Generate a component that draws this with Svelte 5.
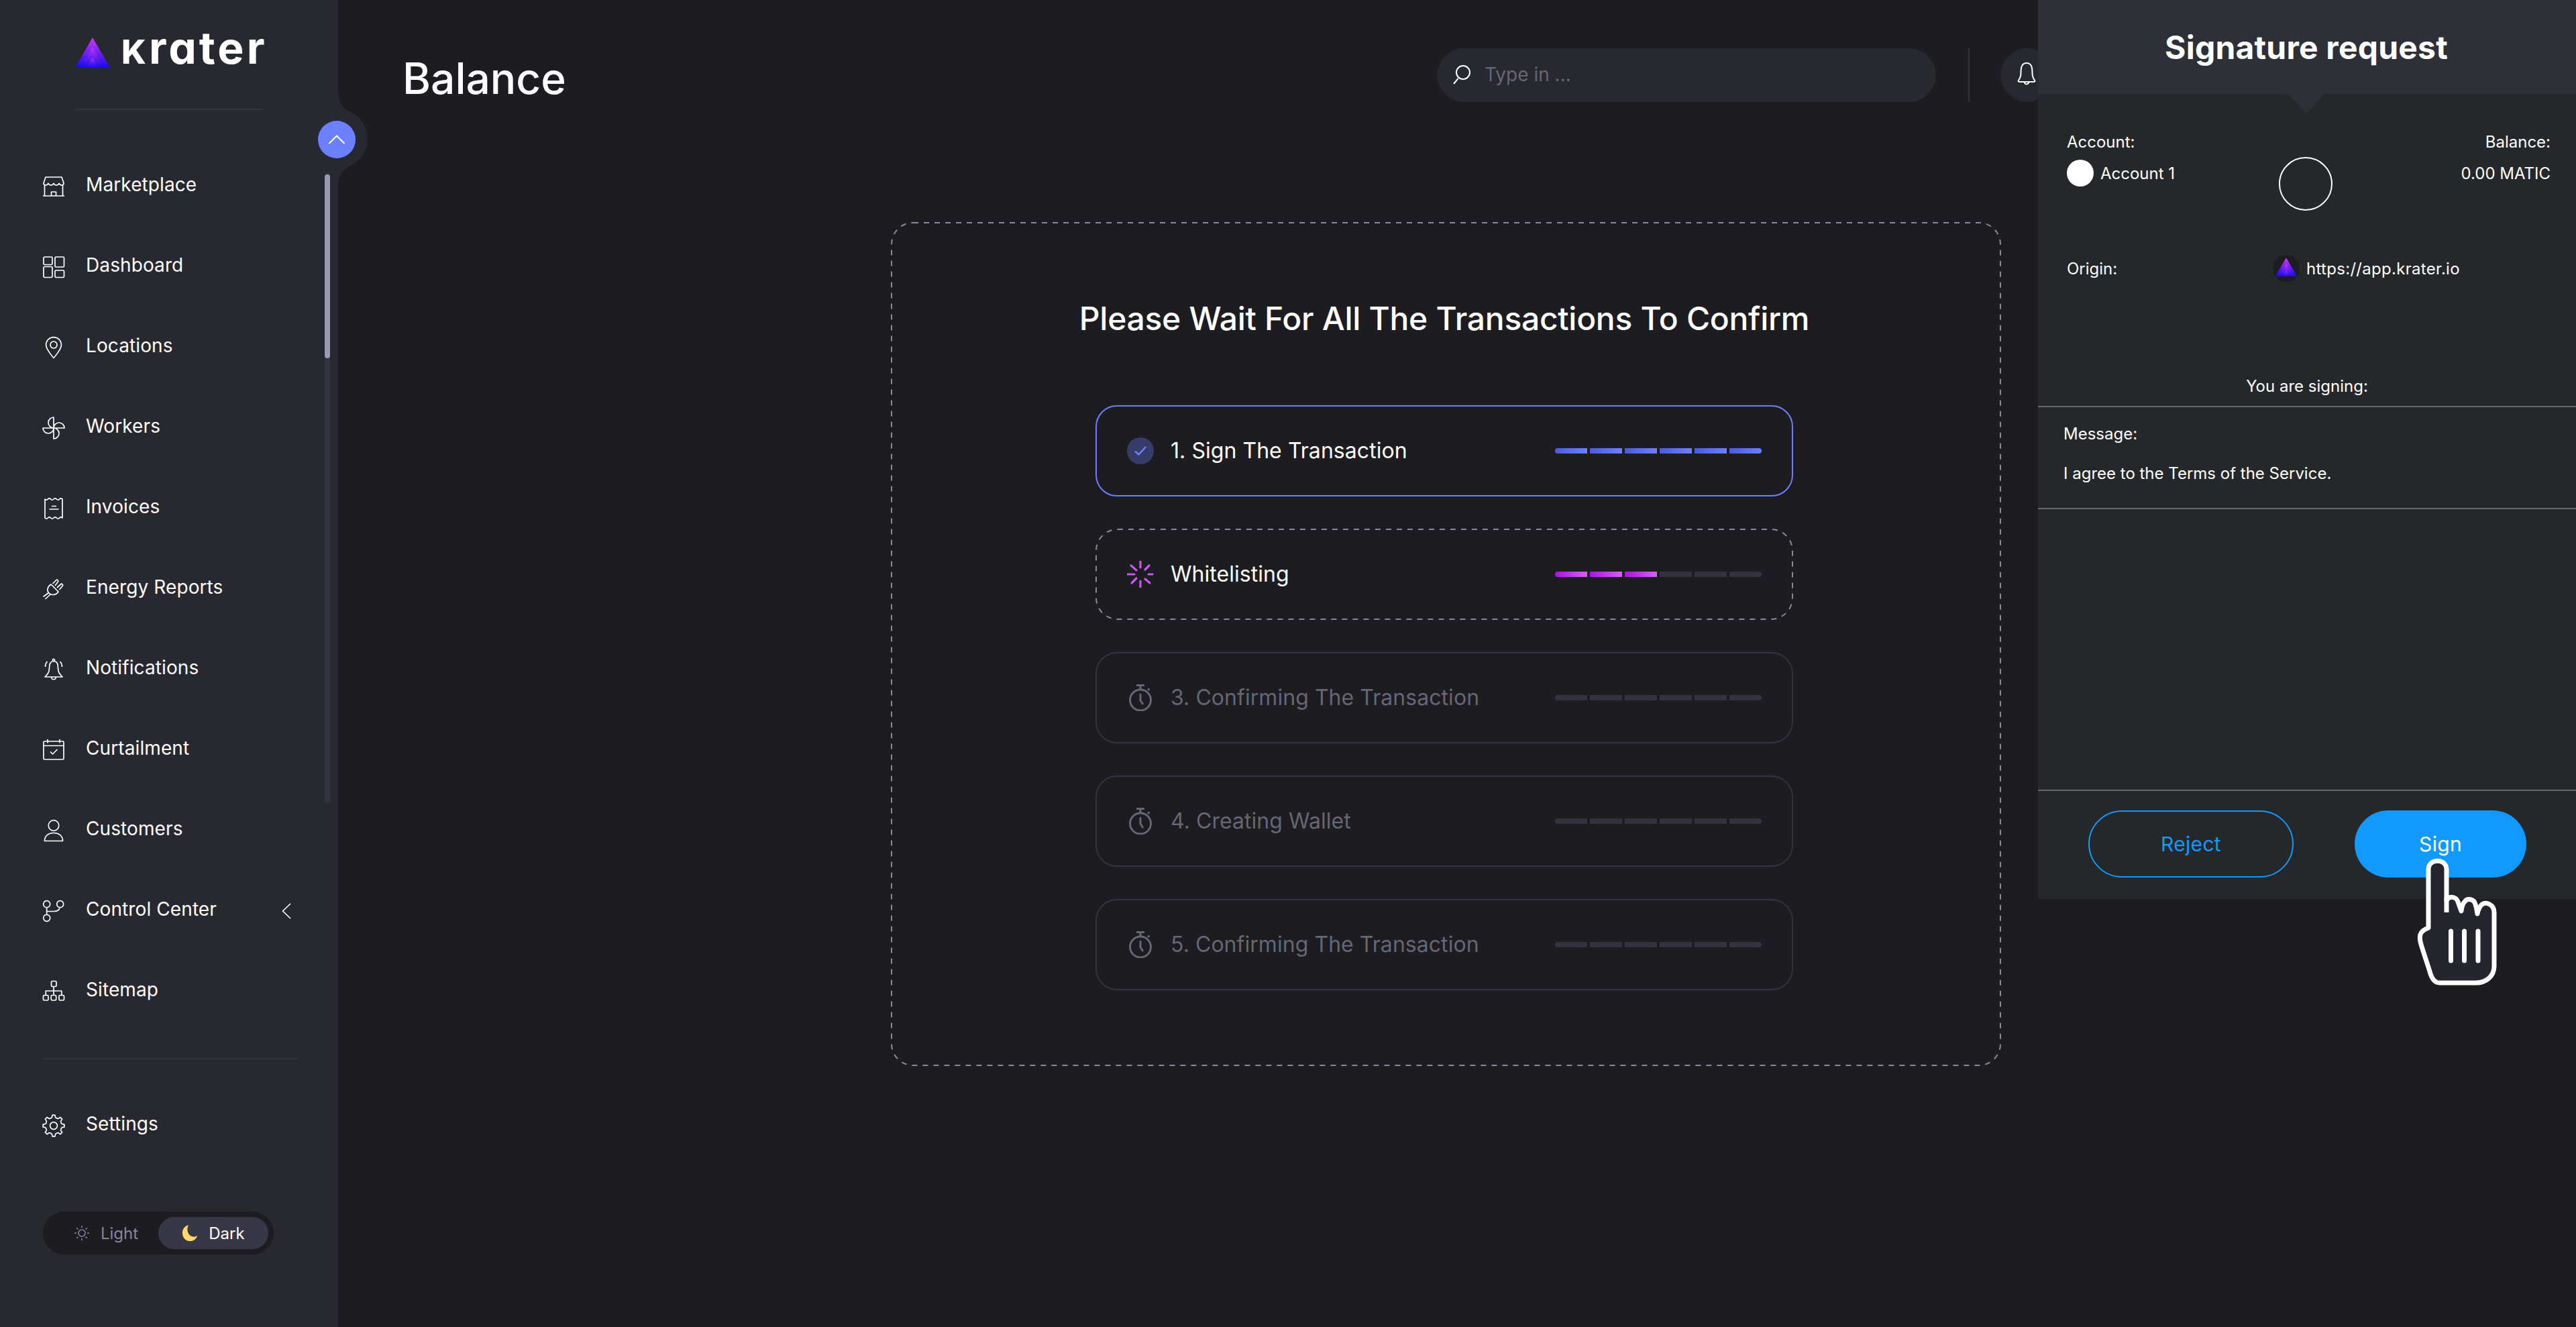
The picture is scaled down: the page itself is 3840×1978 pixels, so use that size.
<script>
  function circle(cx, cy, r) {
    return `M${cx - r} ${cy}a${r} ${r} 0 1 0 ${2 * r} 0a${r} ${r} 0 1 0 ${-2 * r} 0`
  }

  function box(x, y, w, h) {
    return `M${x + 1.5} ${y}h${w - 3}q1.5 0 1.5 1.5v${h - 3}q0 1.5-1.5 1.5h${-(w - 3)}q-1.5 0-1.5-1.5v${-(h - 3)}q0-1.5 1.5-1.5z`
  }

  function gear() {
    let d = ''
    const pt = (deg, r) => {
      const a = (deg * Math.PI) / 180
      return `${(16 + r * Math.cos(a)).toFixed(2)} ${(16 + r * Math.sin(a)).toFixed(2)}`
    }
    for (let i = 0; i < 8; i++) {
      const a = i * 45 - 90
      d += `${i ? 'L' : 'M'}${pt(a - 12, 12.6)}L${pt(a - 7, 16)}L${pt(a + 7, 16)}L${pt(a + 12, 12.6)}Q${pt(a + 22.5, 11.4)} ${pt(a + 33, 12.6)}`
    }
    return d + 'z' + circle(16, 16, 5.4)
  }

  const nav = [
    { label: 'Marketplace', d: 'M4 2H28L31 11C31 15 26 15 24 11.5C22 15 18 15 16 11.5C14 15 10 15 8 11.5C6 15 1 15 1 11ZM2.5 14V30M29.5 14V30M0 30H32M12.5 30V24H19.5V30' },
    { label: 'Dashboard', d: box(1, 1, 13, 11.5) + box(18, 1, 13.5, 15) + box(1, 15.5, 13, 16) + box(18, 21, 13.5, 10.5) },
    { label: 'Locations', d: 'M16 31.5C16 31.5 4.6 19 4.6 12A11.4 11.4 0 0 1 27.4 12C27.4 19 16 31.5 16 31.5Z' + circle(16, 12, 5) },
    { label: 'Workers', d: 'M16 16H32A8 8 0 0 0 16 16M16 16V0A8 8 0 0 0 16 16M16 16H0A8 8 0 0 0 16 16M16 16V32A8 8 0 0 0 16 16' },
    { label: 'Invoices', d: 'M3 2q2.17 2.4 4.33 0t4.33 0t4.33 0t4.33 0t4.33 0t4.33 0V30q-2.17-2.4-4.33 0t-4.33 0t-4.33 0t-4.33 0t-4.33 0t-4.33 0ZM13 12.5H20M9.5 17H23.5' },
    { label: 'Energy Reports', d: 'M12 9L23 20C20 25 13 26 9 22C5 18 7 12 12 9ZM14.5 8L20 2.5C21 1.5 23.5 3.5 22.5 5L18 11M21 14L27 8.5C28 7.5 30.5 10 29.5 11L24.5 17M8.5 21.5L0.5 27.5M11 24L3.5 31' },
    { label: 'Notifications', d: 'M16 3.5C10.5 3.5 9.5 8 9.5 14C9.5 20 7 23 3 27H29C25 23 22.5 20 22.5 14C22.5 8 21.5 3.5 16 3.5ZM12.5 27C13 32 19 32 19.5 27' + circle(16, 2, 1.6) + 'M3.5 12C3.5 9 4.5 6 6.5 4M28.5 12C28.5 9 27.5 6 25.5 4' },
    { label: 'Curtailment', d: box(1, 3, 30, 27) + 'M1 9.5H31M7 0V5.5M25 0V5.5M11 18.5L14.5 22L21.5 15' },
    { label: 'Customers', d: circle(16, 8.5, 7.8) + 'M2.5 31.5C2.5 23 9 19.5 16 19.5C23 19.5 29.5 23 29.5 31.5Z' },
    { label: 'Control Center', arrow: true, d: circle(5.7, 5.7, 5) + circle(25.7, 5.7, 5) + circle(5.7, 26.3, 5) + 'M5.7 10.7V21.3M5.7 16.5H16C21 16.5 24.5 15 25 10.7' },
    { label: 'Sitemap', d: box(12.5, 0.5, 7.5, 8) + box(0.5, 21.5, 7.5, 7.5) + box(12.2, 21.5, 7.5, 7.5) + box(24, 21.5, 7.5, 7.5) + 'M16 8.5V21.5M4.2 21.5V15H27.8V21.5' }
  ]

  const settingsIcon = gear()

  const steps = [
    { label: '1. Sign The Transaction', state: 'done', filled: 6 },
    { label: 'Whitelisting', state: 'active', filled: 3 },
    { label: '3. Confirming The Transaction', state: 'waiting', filled: 0 },
    { label: '4. Creating Wallet', state: 'waiting', filled: 0 },
    { label: '5. Confirming The Transaction', state: 'waiting', filled: 0 }
  ]

  const spinner = [
    [0, -10, 0, -19], [0, 10, 0, 19], [-9, 0, -19, 0], [12, 0, 18, 0],
    [-6, -6, -14, -13], [7, -7, 13, -13], [-6, 6, -13, 13], [7, 7, 14, 13]
  ]

  const rays = [0, 45, 90, 135, 180, 225, 270, 315]
</script>

{#snippet triangle(id)}
  <svg class="tri" viewBox="0 0 52 45">
    <defs>
      <linearGradient id="{id}a" x1="0" y1="0" x2="0" y2="1">
        <stop offset="0" stop-color="#d436f6" />
        <stop offset="1" stop-color="#130bee" />
      </linearGradient>
      <linearGradient id="{id}b" x1="0" y1="0" x2="0" y2="1">
        <stop offset="0" stop-color="#e040f8" stop-opacity="0.7" />
        <stop offset="1" stop-color="#3a10ee" stop-opacity="0.1" />
      </linearGradient>
    </defs>
    <polygon points="26,0 52,45 0,45" fill="url(#{id}a)" />
    <polygon points="26,14 43,45 9,45" fill="url(#{id}b)" />
    <polygon points="26,30 35,45 17,45" fill="url(#{id}b)" />
  </svg>
{/snippet}

<div class="app">
  <aside class="sidebar">
    <div class="brand">
      <div class="logo">
        {@render triangle('top')}
        <span class="wordmark"><span class="wm-k">k</span>rater</span>
      </div>
    </div>

    <nav>
      {#each nav as item}
        <div class="row">
          <svg class="icon" viewBox="0 0 32 32"><path d={item.d} /></svg>
          <span>{item.label}</span>
          {#if item.arrow}
            <svg class="arrow" viewBox="0 0 14 24"><path d="M13 1L1.5 12L13 23" /></svg>
          {/if}
        </div>
      {/each}
    </nav>

    <div class="rule"></div>

    <div class="row settings">
      <svg class="icon" viewBox="0 0 32 32"><path d={settingsIcon} /></svg>
      <span>Settings</span>
    </div>

    <div class="theme">
      <div class="mode">
        <svg class="sun" viewBox="0 0 24 24">
          <circle cx="12" cy="12" r="5" />
          {#each rays as deg}
            <line x1="12" y1="1" x2="12" y2="4" transform="rotate({deg} 12 12)" />
          {/each}
        </svg>
        <span>Light</span>
      </div>
      <div class="mode on">
        <svg class="moon" viewBox="0 0 24 26">
          <path d="M10 0C3 2 0 7 0 13C0 21 6 26 12 26C18 26 22 23 24 17C21 19.5 15 20 11.5 16C7.5 11.5 7 5 10 0Z" />
        </svg>
        <span>Dark</span>
      </div>
    </div>

    <svg class="bump" viewBox="0 0 50 150">
      <path d="M0 0C0 22 6 30 16 36A44 44 0 0 1 16 118C6 124 0 132 0 150Z" />
    </svg>
    <button class="collapse" aria-label="Collapse">
      <svg viewBox="0 0 26 16"><path d="M1.5 14L13 2.5L24.5 14" /></svg>
    </button>
    <div class="scroll"><div class="thumb"></div></div>
  </aside>

  <main>
    <header>
      <h1>Balance</h1>
      <div class="search">
        <svg viewBox="0 0 28 30"><path d="M3 28L9.5 20M27 11a10 10 0 1 1-20 0a10 10 0 1 1 20 0" /></svg>
        <span>Type in ...</span>
      </div>
      <div class="vline"></div>
      <div class="bell">
        <svg viewBox="0 0 28 34"><path d="M14 1C6 1 5.500 9 5.500 16C5.500 21 4 24 2 26.500C1 28 2 29 3.500 29H24.500C26 29 27 28 26 26.500C24 24 22.500 21 22.500 16C22.500 9 22 1 14 1ZM10.500 29C11 33.500 17 33.500 17.500 29" /></svg>
      </div>
    </header>

    <section class="wait">
      <svg class="dash" viewBox="0 0 1655 1258">
        <rect x="1" y="1" width="1653" height="1256" rx="32" />
      </svg>
      <h2>Please Wait For All The Transactions To Confirm</h2>
      <div class="steps">
        {#each steps as step}
          <div class="step {step.state}">
            {#if step.state == 'active'}
              <svg class="dash" viewBox="0 0 1040 136">
                <rect x="1" y="1" width="1038" height="134" rx="32" />
              </svg>
            {/if}
            {#if step.state == 'done'}
              <span class="tick">
                <svg viewBox="0 0 20 16"><path d="M2 8.500L7.500 13.500L18 2" /></svg>
              </span>
            {:else if step.state == 'active'}
              <svg class="spin" viewBox="-20 -20 40 40">
                {#each spinner as r}
                  <line x1={r[0]} y1={r[1]} x2={r[2]} y2={r[3]} />
                {/each}
              </svg>
            {:else}
              <svg class="timer" viewBox="0 0 40 40">
                <path d="M14 1.500H26M20 1.500V8M31 9L33.500 6.500M20 14V24L24 30" />
                <circle cx="20" cy="23.500" r="15.500" />
              </svg>
            {/if}
            <span class="name">{step.label}</span>
            <div class="bar">
              {#each Array(6) as _, i}
                <i class:full={i < step.filled}></i>
              {/each}
            </div>
          </div>
        {/each}
      </div>
    </section>
  </main>

  <aside class="panel">
    <div class="panel-head">Signature request</div>
    <div class="pointer"></div>

    <div class="accounts">
      <div class="acc-col">
        <div class="line">Account:</div>
        <div class="who"><span class="dot"></span>Account 1</div>
      </div>
      <div class="ring"></div>
      <div class="acc-col end">
        <div class="line">Balance:</div>
        <div class="who">0.00 MATIC</div>
      </div>
    </div>

    <div class="origin">
      <span class="origin-label">Origin:</span>
      <span class="favicon">{@render triangle('fav')}</span>
      <span class="url">https://app.krater.io</span>
    </div>

    <div class="signing">You are signing:</div>
    <div class="message">
      <div>Message:</div>
      <div>I agree to the Terms of the Service.</div>
    </div>
    <div class="blank"></div>

    <div class="actions">
      <button class="reject">Reject</button>
      <button class="sign">Sign</button>
    </div>
  </aside>

  <svg class="hand" viewBox="0 0 124 196">
    <path class="palm" d="M20 107V20C20 3 47 3 47 20V66C51 59 61 60 64 68Q66 74 69 82Q70 72 74 68C78 62 88 64 90 72Q92 78 93 86Q95 76 100 72C106 68 118 72 118 84V164C118 180 105 189 91 189H37C28 189 24 180 22 172L10 135C5 120 6 112 20 107Z" />
    <path class="tick-line" d="M47 62V84" />
    <path class="stripes" d="M53.500 112V156M73.500 112V156M94 112V156" />
  </svg>
</div>

<style>
  :global(body) {
    margin: 0;
    background: #1c1c21;
  }

  .app {
    position: relative;
    display: flex;
    width: 3840px;
    height: 1978px;
    overflow: hidden;
    background: #1c1c21;
    color: #fff;
    font-family: Inter, 'Liberation Sans', sans-serif;
  }

  .sidebar {
    position: relative;
    z-index: 2;
    display: flex;
    flex-direction: column;
    flex: none;
    width: 504px;
    background: #282830;
  }

  .brand {
    width: 280px;
    height: 106px;
    margin-left: 112px;
    padding-top: 56px;
    border-bottom: 2px solid #33333f;
  }

  .logo {
    display: flex;
    align-items: flex-end;
    height: 45px;
  }

  .tri {
    display: block;
    flex: none;
    width: 52px;
    height: 45px;
  }

  .wordmark {
    margin-left: 17px;
    font-size: 66px;
    font-weight: 700;
    line-height: 45px;
    letter-spacing: 4px;
    white-space: nowrap;
    font-feature-settings: 'cv11';
    height: 45px;
    transform: translateY(-7px);
  }

  .wm-k {
    text-transform: uppercase;
    font-size: 50px;
    font-weight: 800;
  }

  nav {
    margin-top: 54px;
  }

  .row {
    display: flex;
    align-items: center;
    height: 120px;
    padding-left: 64px;
    font-size: 28px;
    letter-spacing: 0.1px;
  }

  .row span {
    margin-left: 32px;
    margin-top: -6px;
  }

  .icon {
    flex: none;
    width: 32px;
    height: 32px;
    overflow: visible;
  }

  .icon path,
  .arrow path {
    fill: none;
    stroke: #fff;
    stroke-width: 1.7;
    stroke-linejoin: round;
  }

  .arrow {
    width: 14px;
    height: 24px;
    margin-left: auto;
    margin-right: 70px;
  }

  .rule {
    height: 2px;
    width: 380px;
    margin: 39px 0 0 64px;
    background: #33333f;
  }

  .settings {
    margin-top: 39px;
  }

  .theme {
    display: flex;
    align-items: center;
    width: 344px;
    height: 64px;
    margin: 68px 0 0 64px;
    padding-right: 8px;
    box-sizing: border-box;
    border-radius: 32px;
    background: #1c1c21;
    font-size: 24px;
  }

  .mode {
    display: flex;
    align-items: center;
    justify-content: center;
    height: 48px;
    border-radius: 24px;
    gap: 16px;
    color: #8585a0;
    width: 172px;
    padding-left: 16px;
    box-sizing: border-box;
  }

  .mode.on {
    width: 164px;
    padding-left: 0;
    background: #373747;
    color: #fff;
  }

  .sun {
    width: 24px;
    height: 24px;
  }

  .sun circle,
  .sun line {
    fill: none;
    stroke: #8585a0;
    stroke-width: 1.6;
  }

  .moon {
    width: 24px;
    height: 24px;
    fill: #ffd76a;
  }

  .bump {
    position: absolute;
    left: 504px;
    top: 130px;
    width: 50px;
    height: 150px;
    fill: #282830;
  }

  .collapse {
    position: absolute;
    left: 474px;
    top: 180px;
    display: flex;
    align-items: center;
    justify-content: center;
    width: 56px;
    height: 56px;
    padding: 0;
    border: 0;
    border-radius: 50%;
    background: #6c80ff;
  }

  .collapse svg {
    width: 26px;
    height: 16px;
    fill: none;
    stroke: #fff;
    stroke-width: 2;
  }

  .scroll {
    position: absolute;
    left: 484px;
    top: 258px;
    width: 8px;
    height: 939px;
    border-radius: 4px;
    background: #33333f;
  }

  .thumb {
    height: 274px;
    margin-top: 2px;
    border-radius: 4px;
    background: #9a9ab2;
  }

  main {
    flex: 1;
    min-width: 0;
  }

  header {
    display: flex;
    align-items: center;
    height: 80px;
    padding: 72px 778px 0 96px;
  }

  h1 {
    margin: 8px auto 0 0;
    font-size: 64px;
    font-weight: 500;
  }

  .search {
    display: flex;
    align-items: center;
    width: 744px;
    height: 80px;
    padding-left: 22px;
    box-sizing: border-box;
    border-radius: 40px;
    background: #282830;
    color: #666674;
    font-size: 28px;
  }

  .search svg {
    width: 28px;
    height: 30px;
    margin-right: 21px;
    fill: none;
    stroke: #fff;
    stroke-width: 2;
  }

  .search span {
    margin-top: -2px;
  }

  .vline {
    width: 2px;
    height: 80px;
    margin: 0 46px 0 48px;
    background: #33333f;
  }

  .bell {
    display: flex;
    align-items: center;
    justify-content: center;
    flex: none;
    width: 80px;
    height: 80px;
    border-radius: 50%;
    background: #282830;
  }

  .bell svg {
    width: 28px;
    height: 34px;
    margin: -4px 3px 0 0;
    fill: none;
    stroke: #fff;
    stroke-width: 2;
  }

  .wait {
    position: relative;
    width: 1655px;
    height: 1258px;
    margin: 179px 0 0 824px;
    padding: 115px 0 0 305px;
    box-sizing: border-box;
  }

  .dash {
    position: absolute;
    left: 0;
    top: 0;
    width: 100%;
    height: 100%;
    fill: none;
    stroke: #8a8a9c;
    stroke-width: 2;
    stroke-dasharray: 8 8;
  }

  .step .dash {
    left: -2px;
    top: -2px;
    width: 1040px;
    height: 136px;
  }

  h2 {
    display: flex;
    justify-content: center;
    width: 1040px;
    margin: 0;
    font-size: 48px;
    font-weight: 500;
    line-height: 58px;
    letter-spacing: -0.3px;
    white-space: nowrap;
  }

  .steps {
    display: flex;
    flex-direction: column;
    gap: 48px;
    width: 1040px;
    margin-top: 100px;
  }

  .step {
    position: relative;
    display: flex;
    align-items: center;
    height: 136px;
    padding: 0 45px;
    box-sizing: border-box;
    border: 2px solid #33333f;
    border-radius: 32px;
    font-size: 32px;
  }

  .step.done {
    border-color: #6c80ff;
  }

  .step.active {
    border-color: transparent;
  }

  .step.waiting {
    color: #666674;
  }

  .tick {
    display: flex;
    align-items: center;
    justify-content: center;
    flex: none;
    width: 40px;
    height: 40px;
    border-radius: 50%;
    background: #373d6b;
  }

  .tick svg {
    width: 20px;
    height: 16px;
    fill: none;
    stroke: #6c80ff;
    stroke-width: 2.5;
  }

  .spin {
    flex: none;
    width: 40px;
    height: 40px;
    stroke: #c954ef;
    stroke-width: 3.2;
    stroke-linecap: round;
  }

  .timer {
    flex: none;
    width: 40px;
    height: 40px;
    fill: none;
    stroke: #666674;
    stroke-width: 3;
  }

  .name {
    margin: -2px 0 0 25px;
    letter-spacing: 0.05px;
  }

  .bar {
    display: flex;
    gap: 4px;
    margin-left: auto;
  }

  .bar i {
    width: 48px;
    height: 8px;
    background: #33333f;
  }

  .bar i:first-child {
    border-radius: 4px 0 0 4px;
  }

  .bar i:last-child {
    border-radius: 0 4px 4px 0;
  }

  .done .bar i.full {
    background: linear-gradient(90deg, #4c5dd4, #6c80ff);
  }

  .active .bar i.full {
    background: linear-gradient(90deg, #a817d8, #d75ff2);
  }

  .panel {
    position: absolute;
    z-index: 3;
    top: 0;
    right: 0;
    display: flex;
    flex-direction: column;
    width: 802px;
    height: 1340px;
    background: #25282b;
    font-size: 24px;
  }

  .panel-head {
    display: flex;
    align-items: center;
    justify-content: center;
    flex: none;
    height: 140px;
    padding-right: 2px;
    box-sizing: border-box;
    background: #2d3036;
    font-size: 48px;
    font-weight: 700;
    letter-spacing: 0.2px;
  }

  .pointer {
    position: absolute;
    left: 373px;
    top: 140px;
    border-top: 30px solid #2d3036;
    border-left: 27px solid transparent;
    border-right: 27px solid transparent;
  }

  .accounts {
    display: grid;
    grid-template-columns: 316px 80px 1fr;
    margin-top: 56px;
    padding: 0 38px 0 43px;
  }

  .line {
    line-height: 32px;
  }

  .who {
    display: flex;
    align-items: center;
    height: 40px;
    margin-top: 10px;
  }

  .end {
    text-align: right;
  }

  .end .who {
    justify-content: flex-end;
  }

  .dot {
    width: 40px;
    height: 40px;
    margin-right: 10px;
    border-radius: 50%;
    background: #fff;
  }

  .ring {
    width: 80px;
    height: 80px;
    margin-top: 38px;
    box-sizing: border-box;
    border: 2px solid #fff;
    border-radius: 50%;
  }

  .origin {
    display: flex;
    align-items: center;
    height: 40px;
    margin-top: 66px;
    padding-left: 43px;
  }

  .origin-label {
    width: 307px;
  }

  .favicon {
    display: flex;
    align-items: center;
    justify-content: center;
    width: 40px;
    height: 40px;
    margin-right: 10px;
    border-radius: 50%;
    background: #1c1c21;
  }

  .favicon :global(.tri) {
    width: 32px;
    height: 34px;
    margin-top: -4px;
  }

  .url {
    letter-spacing: 0.3px;
  }

  .signing {
    height: 45px;
    margin-top: 140px;
    border-bottom: 2px solid #6a6a6a;
    line-height: 32px;
    text-align: center;
  }

  .message {
    display: flex;
    flex-direction: column;
    gap: 27px;
    height: 126px;
    padding: 24px 0 0 38px;
    border-bottom: 2px solid #6a6a6a;
    line-height: 32px;
  }

  .blank {
    flex: 1;
    border-bottom: 2px solid #6a6a6a;
  }

  .actions {
    display: flex;
    gap: 91px;
    flex: none;
    padding: 29px 0 32px 75px;
  }

  .actions button {
    height: 100px;
    border-radius: 50px;
    font-family: inherit;
    font-size: 30px;
    font-weight: 400;
    letter-spacing: 0.3px;
  }

  .reject {
    width: 306px;
    border: 2px solid #1299ff;
    background: none;
    color: #1299ff;
  }

  .sign {
    width: 256px;
    border: 0;
    background: #1299ff;
    color: #fff;
  }

  .hand {
    position: absolute;
    z-index: 4;
    left: 3600px;
    top: 1276px;
    width: 124px;
    height: 196px;
    fill: none;
    stroke: #fff;
  }

  .palm {
    fill: #25252e;
    stroke-width: 7;
    stroke-linejoin: round;
  }

  .tick-line {
    stroke-width: 7;
  }

  .stripes {
    stroke-width: 7;
    stroke-linecap: round;
  }
</style>
